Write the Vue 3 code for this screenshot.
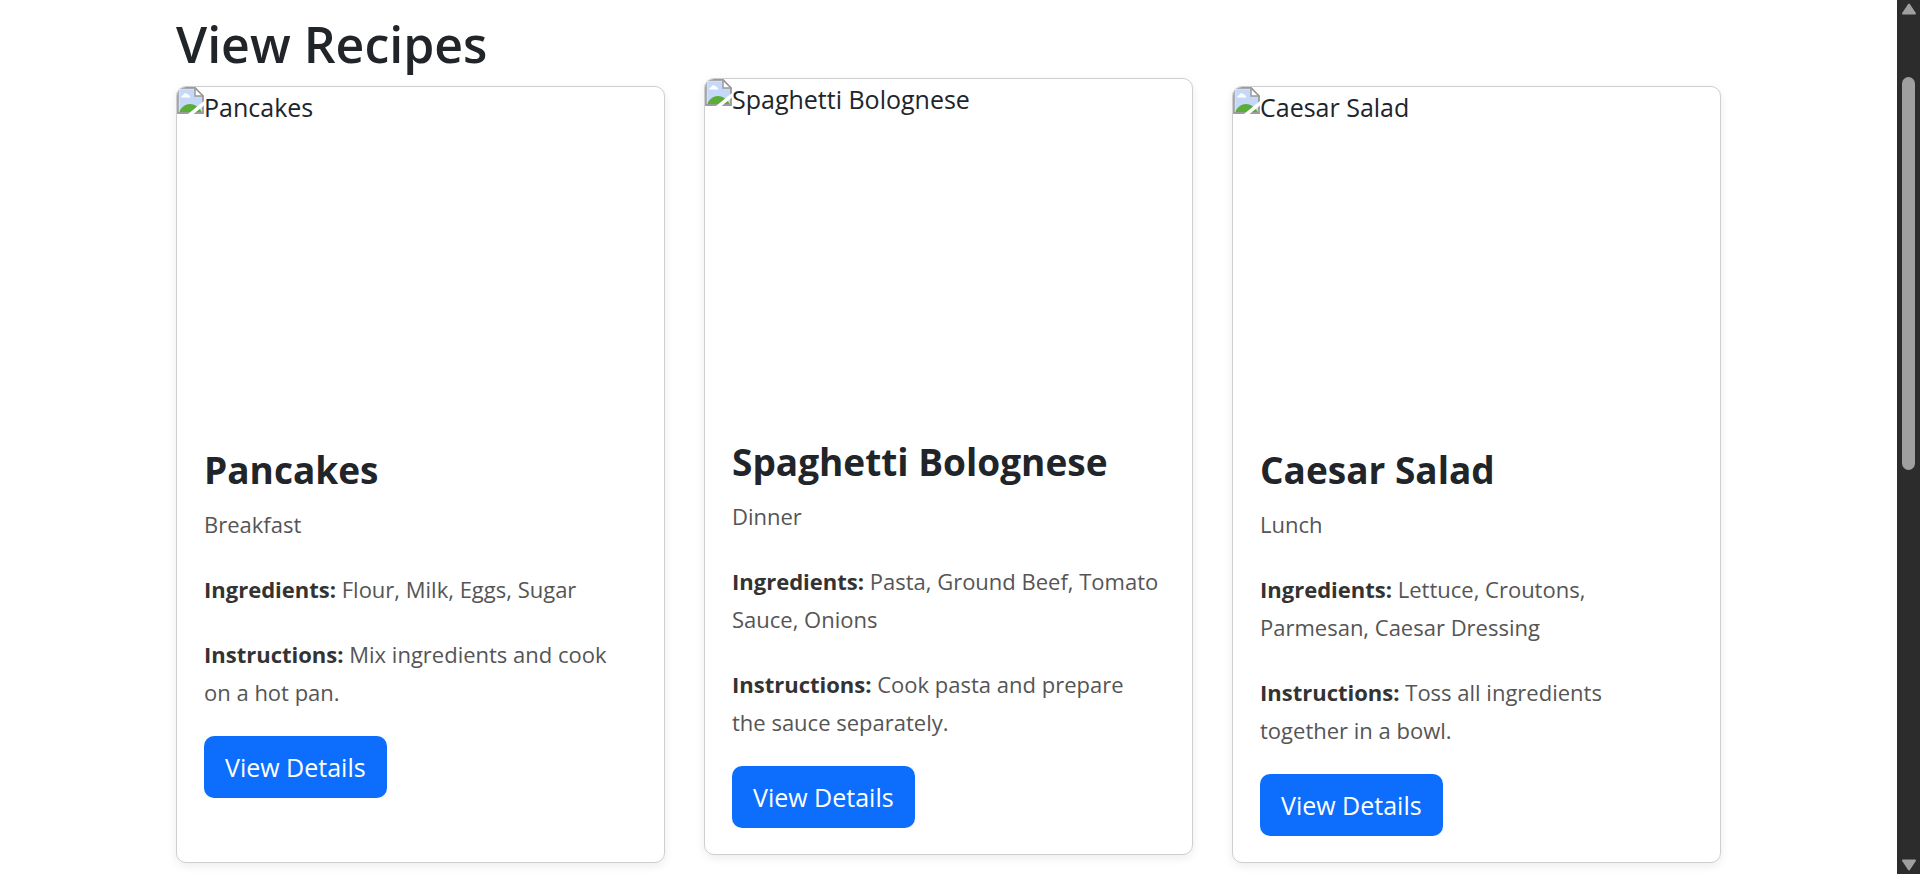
<script setup>
const recipes = [
  {
    name: 'Pancakes',
    category: 'Breakfast',
    ingredients: 'Flour, Milk, Eggs, Sugar',
    instructions: 'Mix ingredients and cook on a hot pan.',
  },
  {
    name: 'Spaghetti Bolognese',
    category: 'Dinner',
    ingredients: 'Pasta, Ground Beef, Tomato Sauce, Onions',
    instructions: 'Cook pasta and prepare the sauce separately.',
    raised: true,
  },
  {
    name: 'Caesar Salad',
    category: 'Lunch',
    ingredients: 'Lettuce, Croutons, Parmesan, Caesar Dressing',
    instructions: 'Toss all ingredients together in a bowl.',
  },
]
</script>

<template>
  <div class="page">
    <main class="content">
      <h1 class="heading">View Recipes</h1>
      <div class="cards">
        <article
          v-for="recipe in recipes"
          :key="recipe.name"
          class="card"
          :class="{ raised: recipe.raised }"
        >
          <div class="photo">
            <svg class="broken" viewBox="0 0 27 27" aria-hidden="true">
              <path d="M1 1H18L26 9V26H1Z" fill="#c6d8f8" />
              <path d="M4.500 10.500a1.700 1.700 0 0 1 1.500-2.300a2.400 2.400 0 0 1 4.500-.700a2 2 0 0 1 2 1.200a1.300 1.300 0 0 1 .500 1.800Z" fill="#fff" />
              <path d="M2 25.500C4 20 8.500 17 13 17C17.500 17 22 20 25 25.500Z" fill="#5aad36" />
              <path d="M1 1H18L26 9V26H1Z" fill="none" stroke="#9b9b9b" stroke-width="1.800" />
              <path d="M2.200 25V2.200H17.500" fill="none" stroke="#e4ecfb" stroke-width=".6" />
              <path d="M18 1V9H26Z" fill="#fff" stroke="#9b9b9b" stroke-width="1.500" />
              <path d="M11 27L27 14V18.500L16.500 27Z" fill="#fff" />
            </svg>
            <span>{{ recipe.name }}</span>
          </div>
          <div class="body">
            <h2 class="title">{{ recipe.name }}</h2>
            <p class="category">{{ recipe.category }}</p>
            <p><strong>Ingredients:</strong> {{ recipe.ingredients }}</p>
            <p><strong>Instructions:</strong> {{ recipe.instructions }}</p>
            <button type="button" class="details">View Details</button>
          </div>
        </article>
      </div>
    </main>
    <div class="scrollbar" aria-hidden="true">
      <svg class="arrow" viewBox="0 0 16 12"><path d="M8 1.500L14 10.500H2Z" /></svg>
      <div class="track"><div class="thumb"></div></div>
      <svg class="arrow" viewBox="0 0 16 12"><path d="M8 10.500L14 1.500H2Z" /></svg>
    </div>
  </div>
</template>

<style>
body {
  margin: 0;
  background: #fff;
}
</style>

<style scoped>
.page {
  display: flex;
  min-height: 100vh;
  font-family: 'Segoe UI', 'Open Sans', 'Noto Sans', sans-serif;
  color: #212529;
}
.content {
  flex: 1;
  min-width: 0;
  max-width: 1545px;
  margin: 0 auto;
  padding: 14px 24px 0;
}
.heading {
  margin: 0 0 12px;
  font-size: 50px;
  font-weight: 600;
  line-height: 60px;
}
.cards {
  display: grid;
  grid-template-columns: repeat(auto-fit, minmax(400px, 1fr));
  gap: 39px;
}
.card {
  border: 1px solid #cfcfcf;
  border-radius: 10px;
  background: #fff;
  overflow: hidden;
  box-shadow: 0 3px 10px rgba(0, 0, 0, 0.08);
}
.raised {
  transform: translateY(-8px);
}
.photo {
  display: flex;
  align-items: flex-start;
  height: 333px;
  font-size: 25px;
  line-height: 41px;
}
.broken {
  flex: none;
  width: 27px;
  height: 27px;
}
.body {
  padding: 27px 31px 26px 27px;
}
.title {
  margin: 0 0 12px;
  font-size: 37px;
  font-weight: 700;
  line-height: 46px;
}
p {
  margin: 0 0 27px;
  font-size: 22px;
  line-height: 38px;
  color: #555;
}
p:last-of-type {
  margin-bottom: 25px;
}
strong {
  font-weight: 700;
  color: #333;
}
.details {
  display: block;
  padding: 11px 21px;
  border: 0;
  border-radius: 10px;
  background: #0d6efd;
  color: #fff;
  font: inherit;
  font-size: 25px;
  line-height: 40px;
}
.scrollbar {
  position: sticky;
  top: 0;
  display: flex;
  flex-direction: column;
  align-items: center;
  justify-content: space-between;
  box-sizing: border-box;
  width: 23px;
  height: 100vh;
  padding: 3px 0;
  background: #2c2c2c;
}
.arrow {
  width: 16px;
  height: 12px;
  fill: #9f9f9f;
  stroke: #9f9f9f;
  stroke-width: 2;
  stroke-linejoin: round;
}
.track {
  flex: 1;
  width: 13px;
  padding-top: 62px;
}
.thumb {
  height: 45vh;
  border-radius: 7px;
  background: #9f9f9f;
}
</style>
